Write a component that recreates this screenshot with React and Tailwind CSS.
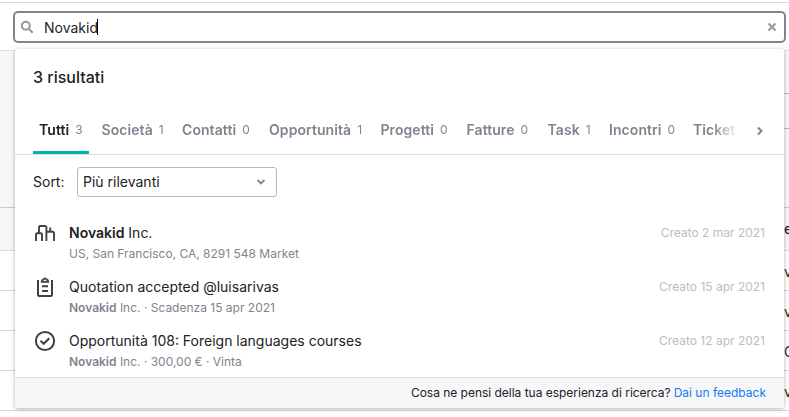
import React from 'react';
import { clsx } from 'clsx';

const TABS = [
    { name: 'Tutti', count: 3, width: 'w-[62.5px]', active: true },
    { name: 'Società', count: 1, width: 'w-[80.5px]' },
    { name: 'Contatti', count: 0, width: 'w-[87px]' },
    { name: 'Opportunità', count: 1, width: 'w-[111.5px]' },
    { name: 'Progetti', count: 0, width: 'w-[86px]' },
    { name: 'Fatture', count: 0, width: 'w-[81px]' },
    { name: 'Task', count: 1, width: 'w-[61.5px]' },
    { name: 'Incontri', count: 0, width: 'w-[84px]' },
    { name: 'Ticket', count: 0, width: 'w-[80px]' },
];

const TABLE_ROWS = ['v', 'v', 'O', 'v'];

const SearchIcon = () => (
    <svg width="14" height="14" viewBox="0 0 14 14" fill="none" stroke="#96959f" strokeWidth="2">
        <circle cx="5.8" cy="5.8" r="4" />
        <path d="m8.700 8.700 4 4" />
    </svg>
);

const ClearIcon = () => (
    <svg width="10" height="10" viewBox="0 0 10 10" fill="none" stroke="#96959f" strokeWidth="2">
        <path d="m1.500 1.500 7 7M8.500 1.500l-7 7" />
    </svg>
);

const CompanyIcon = () => (
    <svg width="22" height="20" viewBox="0 0 22 20" fill="none" stroke="#414047" strokeWidth="1.900">
        <path d="M2 18v-6.500a1.200 1.200 0 0 1 1.200-1.200h3.600A1.200 1.200 0 0 1 8 11.500V18" />
        <path d="M5 10.300V4.200A1.200 1.200 0 0 1 6.200 3h5a1.200 1.200 0 0 1 1.200 1.200V18" />
        <path d="M12.400 8.700h6.400A1.200 1.200 0 0 1 20 9.900V18M16.200 8.700V4.500" />
    </svg>
);

const TaskIcon = () => (
    <svg width="22" height="22" viewBox="0 0 22 22" fill="none" stroke="#414047" strokeWidth="2">
        <path d="M4 4v15a1 1 0 0 0 1 1h12a1 1 0 0 0 1-1V4" />
        <path d="M7.800 5.800c0-1.400.600-2.100 1.700-2.300a1.600 1.600 0 0 1 3 0c1.100.200 1.700.900 1.700 2.300z" strokeWidth="1.800" />
        <path d="M8 10.300h6M8 15h6" />
    </svg>
);

const DealIcon = () => (
    <svg width="22" height="22" viewBox="0 0 22 22" fill="none" stroke="#414047" strokeWidth="2">
        <circle cx="11" cy="11" r="9.100" />
        <path d="m6.500 10.800 3.200 3 5.600-5.600" />
    </svg>
);

const RESULTS = [
    { icon: CompanyIcon, match: 'Novakid', title: ' Inc.', detail: 'US, San Francisco, CA, 8291 548 Market', date: 'Creato 2 mar 2021' },
    { icon: TaskIcon, title: 'Quotation accepted @luisarivas', company: 'Novakid', detail: ' Inc. · Scadenza 15 apr 2021', date: 'Creato 15 apr 2021' },
    { icon: DealIcon, title: 'Opportunità 108: Foreign languages courses', company: 'Novakid', detail: ' Inc. · 300,00 € · Vinta', date: 'Creato 12 apr 2021' },
];

const PageBackdrop = () => (
    <div className="flex h-full flex-col text-sm">
        <div className="h-[51px] border-b border-[#dedee1] pt-[2px]">
            <div className="h-px bg-[#d9d9dc]" />
        </div>
        <div className="flex h-[157px] flex-col items-end border-b border-[#c9c9ce] bg-[#f7f7f9]">
            <div className="mt-[42px] h-9 w-[5px] border-y border-[#b7b7be]" />
        </div>
        <div className="flex h-[43px] items-center justify-end border-b border-[#d9d9dc] bg-[#f7f7f9]">
            <span className="w-[5px] font-medium">e</span>
        </div>
        {TABLE_ROWS.map((text, i) => (
            <div key={i} className="flex h-10 items-center justify-end border-b border-[#d9d9dc] pt-0.5">
                <span className="w-[5px]">{text}</span>
            </div>
        ))}
    </div>
);

const Tabs = () => (
    <div className="flex h-12 border-b border-[#dfdfe2] pl-[18px]">
        <div className="flex w-[704px] overflow-hidden [mask-image:linear-gradient(to_right,black_680px,transparent_706px)]">
            {TABS.map((tab) => (
                <div key={tab.name} className={clsx('shrink-0', tab.width)}>
                    <div className={clsx(
                        'flex h-[47px] w-14 items-center gap-1.5 border-b-[3px] pt-0.5 pl-1.5 whitespace-nowrap',
                        tab.active ? 'border-[#00b3ad]' : 'border-transparent'
                    )}>
                        <span className={clsx('text-sm font-semibold tracking-[0.07px]', tab.active ? 'text-[#222126]' : 'text-[#84828f]')}>
                            {tab.name}
                        </span>
                        <span className="text-xs text-[#84828f]">{tab.count}</span>
                    </div>
                </div>
            ))}
        </div>
        <div className="flex h-[47px] flex-1 items-center pl-[19px]">
            <svg width="8" height="10" viewBox="0 0 8 10" fill="none" stroke="#84828f" strokeWidth="2">
                <path d="m2 1.500 3.500 3.500L2 8.500" />
            </svg>
        </div>
    </div>
);

const ResultRow = ({ item }) => (
    <div className="flex h-[54px] pl-[19px] pr-[19px]">
        <div className="flex h-[22px] w-[35px] items-center">
            <item.icon />
        </div>
        <div className="flex-1">
            <p className="text-sm leading-[22px]">
                {item.match && <span className="font-semibold">{item.match}</span>}
                {item.title}
            </p>
            <p className="text-xs leading-5 text-[#84828f]">
                {item.company && <span className="font-semibold">{item.company}</span>}
                {item.detail}
            </p>
        </div>
        <span className="text-xs leading-[22px] text-[#bdbcc2]">{item.date}</span>
    </div>
);

const SearchPanel = () => (
    <div className="flex h-[359px] w-[769px] flex-col overflow-hidden rounded-[3px] bg-white shadow-[0_1px_4px_rgba(60,60,75,0.4)]">
        <h2 className="h-[58px] pl-[18px] pt-4 text-base leading-6 font-medium">3 risultati</h2>
        <Tabs />
        <div className="flex h-[67px] items-start pl-[18px] pt-3 text-sm">
            <span className="w-11 leading-[30px]">Sort:</span>
            <div className="flex h-[30px] w-[200px] items-center justify-between rounded-[3px] border border-[#b7b7be] pl-[5px] pr-2.5">
                Più rilevanti
                <svg width="10" height="8" viewBox="0 0 10 8" fill="none" stroke="#84828f" strokeWidth="1.800">
                    <path d="m1.500 2 3.500 3.500L8.500 2" />
                </svg>
            </div>
        </div>
        <div className="h-[155px]">
            {RESULTS.map((item) => (
                <ResultRow key={item.title} item={item} />
            ))}
        </div>
        <div className="flex h-[31px] items-center justify-end gap-[3px] border-t border-[#dfdfe2] bg-[#f7f7f9] pr-[18px] text-xs">
            <span className="tracking-[-0.02px]">Cosa ne pensi della tua esperienza di ricerca?</span>
            <span className="text-[#0f7ff2]">Dai un feedback</span>
        </div>
    </div>
);

const App = () => (
    <div className="relative h-[417px] w-[789px] overflow-hidden bg-white font-['Inter',sans-serif] text-[#222126]">
        <PageBackdrop />
        <div className="absolute top-[11px] left-[13px]">
            <div className="flex h-8 w-[773px] items-center rounded-[5px] border-2 border-[#84828f] bg-white pl-[5px] pr-[7px] text-sm">
                <SearchIcon />
                <span className="ml-2.5 pt-0.5">Novakid</span>
                <span className="-ml-px h-4 w-px bg-black" />
                <span className="ml-auto"><ClearIcon /></span>
            </div>
            <div className="mt-1.5 ml-[2px]">
                <SearchPanel />
            </div>
        </div>
    </div>
);

export default App;
